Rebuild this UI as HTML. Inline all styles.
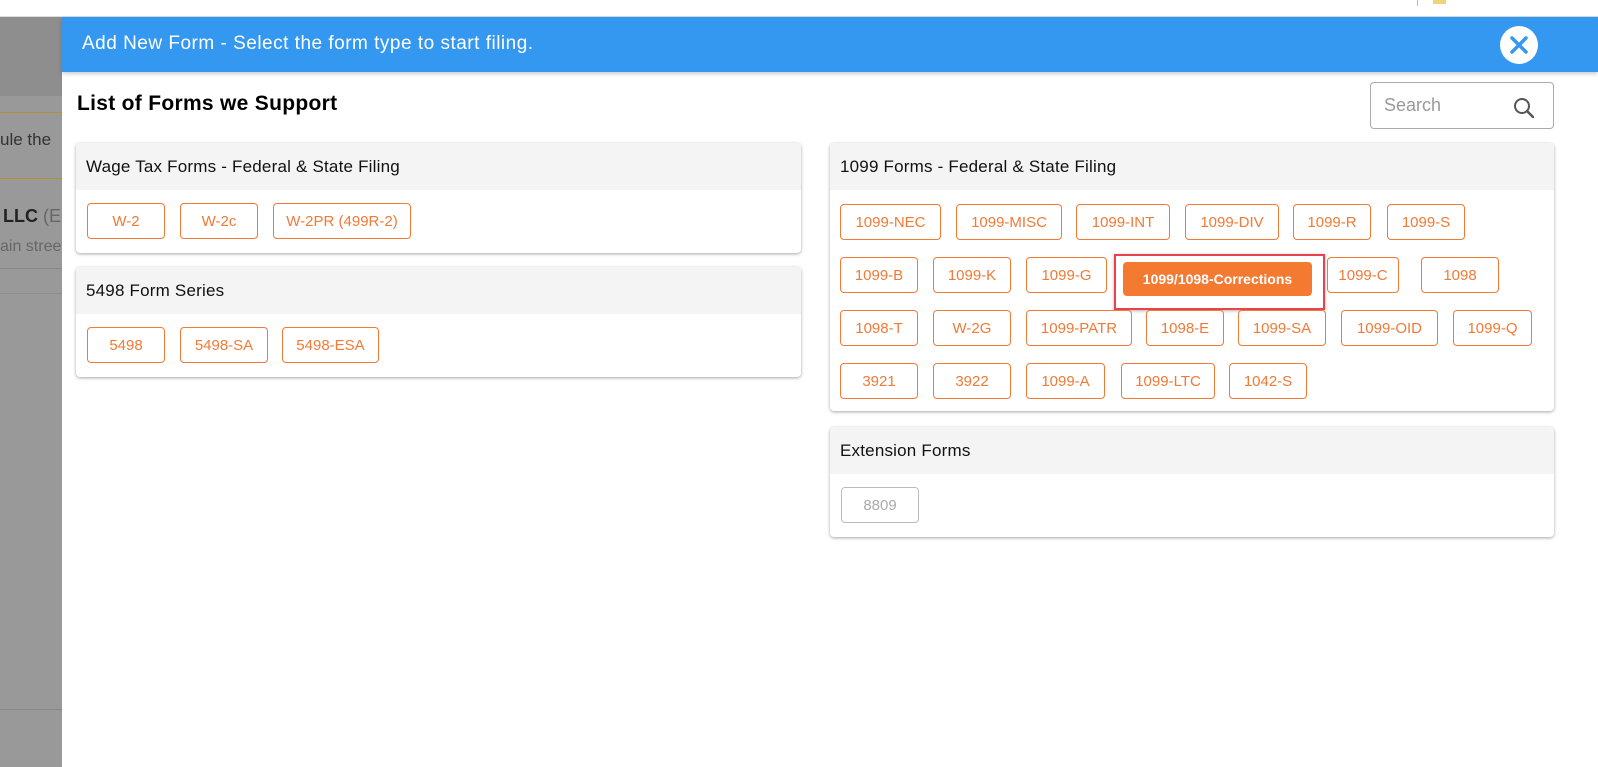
<!DOCTYPE html>
<html><head><meta charset="utf-8"><style>
*{box-sizing:border-box;margin:0;padding:0}
body{width:1598px;height:767px;position:relative;overflow:hidden;background:#fff;font-family:"Liberation Sans",sans-serif}
.a{position:absolute}
.b{position:absolute;border:1px solid #f07a36;border-radius:4px;color:#f07a36;font-size:15px;display:flex;align-items:center;justify-content:center;background:#fff;white-space:nowrap}
.card{position:absolute;background:#fff;border-radius:4px;box-shadow:0 1px 3px rgba(0,0,0,.35)}
.hd{height:47px;background:#f4f4f4;font-size:17px;color:#111;padding:14px 10px 0 10px;border-radius:4px 4px 0 0;letter-spacing:.2px}
</style></head><body>
<div class="a" style="left:0;top:16px;width:1598px;height:1px;background:#ddd"></div>
<div class="a" style="left:1417px;top:0;width:1px;height:6px;background:#bbb"></div>
<div class="a" style="left:1433px;top:0;width:13px;height:4px;background:#f2d27a"></div>
<div class="a" style="left:0;top:17px;width:62px;height:750px;background:#999"></div>
<div class="a" style="left:0;top:17px;width:62px;height:79px;background:#8e8e8e"></div>
<div class="a" style="left:0;top:112px;width:62px;height:1px;background:#b09030"></div>
<div class="a" style="left:0;top:178px;width:62px;height:1px;background:#b09030"></div>
<div class="a" style="left:0;top:130px;font-size:17px;color:#333;white-space:nowrap;width:62px;overflow:hidden">ule the</div>
<div class="a" style="left:3px;top:206px;font-size:18px;color:#222;font-weight:bold;white-space:nowrap;width:59px;overflow:hidden">LLC <span style="font-weight:normal;color:#666">(EI</span></div>
<div class="a" style="left:0;top:238px;font-size:16px;color:#666;white-space:nowrap;width:62px;overflow:hidden">ain street</div>
<div class="a" style="left:0;top:268px;width:62px;height:1px;background:#888"></div>
<div class="a" style="left:0;top:293px;width:62px;height:1px;background:#8e8e8e"></div>
<div class="a" style="left:0;top:709px;width:62px;height:1px;background:#888"></div>

<div class="a" style="left:62px;top:17px;width:1536px;height:55px;background:#3498f0;box-shadow:0 2px 4px rgba(0,0,0,.2)"></div>
<div class="a" style="left:82px;top:33px;font-size:19px;color:#fff;letter-spacing:.5px">Add New Form - Select the form type to start filing.</div>
<div class="a" style="left:1500px;top:26px;width:38px;height:38px;border-radius:50%;background:#fff"></div>
<svg class="a" style="left:1500px;top:26px" width="38" height="38"><path d="M12 12L26 26M26 12L12 26" stroke="#3498f0" stroke-width="3.5" stroke-linecap="round"/></svg>
<div class="a" style="left:77px;top:92px;font-size:21px;font-weight:bold;color:#000;letter-spacing:.3px">List of Forms we Support</div>
<div class="a" style="left:1370px;top:82px;width:184px;height:47px;border:1px solid #aaa;border-radius:4px"></div>
<div class="a" style="left:1384px;top:95px;font-size:18px;color:#999">Search</div>
<svg class="a" style="left:1512px;top:96px" width="24" height="24"><circle cx="10" cy="10" r="7" fill="none" stroke="#555" stroke-width="2"/><path d="M15 15L21 21" stroke="#555" stroke-width="2.4" stroke-linecap="round"/></svg>

<div class="card" style="left:76px;top:143px;width:725px;height:110px"><div class="hd">Wage Tax Forms - Federal &amp; State Filing</div></div>
<div class="card" style="left:76px;top:267px;width:725px;height:110px"><div class="hd">5498 Form Series</div></div>
<div class="card" style="left:830px;top:143px;width:724px;height:268px"><div class="hd">1099 Forms - Federal &amp; State Filing</div></div>
<div class="card" style="left:830px;top:427px;width:724px;height:110px"><div class="hd">Extension Forms</div></div>

<div class="b" style="left:87px;top:203px;width:78px;height:36px">W-2</div>
<div class="b" style="left:180px;top:203px;width:78px;height:36px">W-2c</div>
<div class="b" style="left:273px;top:203px;width:138px;height:36px">W-2PR (499R-2)</div>
<div class="b" style="left:87px;top:327px;width:78px;height:36px">5498</div>
<div class="b" style="left:180px;top:327px;width:88px;height:36px">5498-SA</div>
<div class="b" style="left:282px;top:327px;width:97px;height:36px">5498-ESA</div>

<div class="b" style="left:840px;top:204px;width:101px;height:36px">1099-NEC</div>
<div class="b" style="left:956px;top:204px;width:106px;height:36px">1099-MISC</div>
<div class="b" style="left:1076px;top:204px;width:94px;height:36px">1099-INT</div>
<div class="b" style="left:1185px;top:204px;width:94px;height:36px">1099-DIV</div>
<div class="b" style="left:1293px;top:204px;width:78px;height:36px">1099-R</div>
<div class="b" style="left:1387px;top:204px;width:78px;height:36px">1099-S</div>

<div class="b" style="left:840px;top:257px;width:78px;height:36px">1099-B</div>
<div class="b" style="left:933px;top:257px;width:78px;height:36px">1099-K</div>
<div class="b" style="left:1026px;top:257px;width:81px;height:36px">1099-G</div>
<div class="a" style="left:1114px;top:254px;width:211px;height:56px;border:2px solid #e8424a;box-shadow:0 1px 3px rgba(0,0,0,.3)"></div>
<div class="b" style="left:1123px;top:262px;width:189px;height:34px;background:#f47a32;border-color:#f47a32;color:#fff;font-weight:bold;font-size:14px">1099/1098-Corrections</div>
<div class="b" style="left:1327px;top:257px;width:72px;height:36px">1099-C</div>
<div class="b" style="left:1421px;top:257px;width:78px;height:36px">1098</div>

<div class="b" style="left:840px;top:310px;width:78px;height:36px">1098-T</div>
<div class="b" style="left:933px;top:310px;width:78px;height:36px">W-2G</div>
<div class="b" style="left:1026px;top:310px;width:106px;height:36px">1099-PATR</div>
<div class="b" style="left:1146px;top:310px;width:78px;height:36px">1098-E</div>
<div class="b" style="left:1238px;top:310px;width:88px;height:36px">1099-SA</div>
<div class="b" style="left:1341px;top:310px;width:97px;height:36px">1099-OID</div>
<div class="b" style="left:1453px;top:310px;width:79px;height:36px">1099-Q</div>

<div class="b" style="left:840px;top:363px;width:78px;height:36px">3921</div>
<div class="b" style="left:933px;top:363px;width:78px;height:36px">3922</div>
<div class="b" style="left:1026px;top:363px;width:79px;height:36px">1099-A</div>
<div class="b" style="left:1121px;top:363px;width:94px;height:36px">1099-LTC</div>
<div class="b" style="left:1229px;top:363px;width:78px;height:36px">1042-S</div>

<div class="b" style="left:841px;top:487px;width:78px;height:36px;border-color:#bbb;color:#aaa">8809</div>
</body></html>
